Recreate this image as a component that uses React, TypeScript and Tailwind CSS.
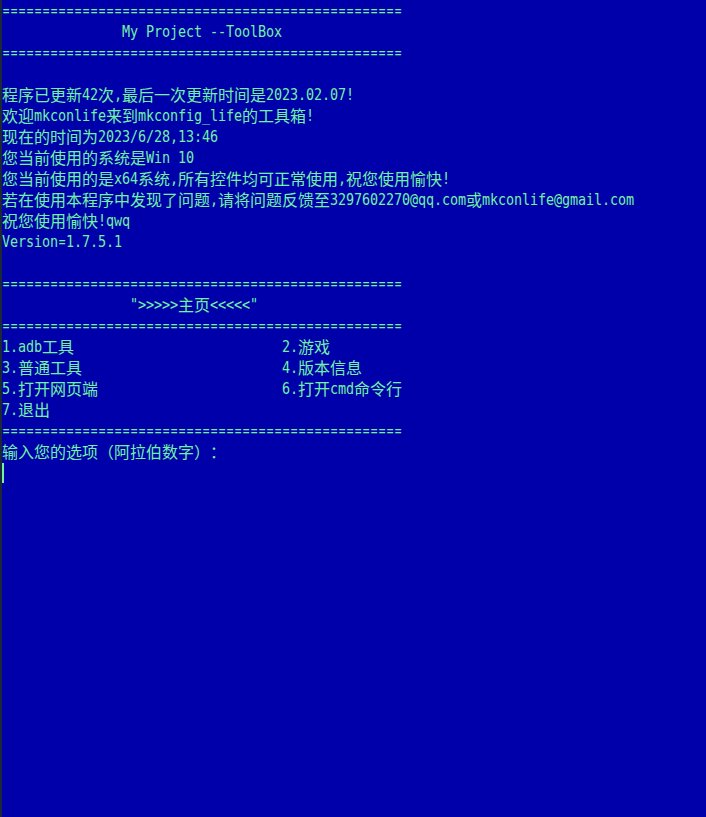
import React from "react";

const SEP = "=".repeat(50);

const lines: string[] = [
  SEP,
  " ".repeat(15) + "My Project --ToolBox",
  SEP,
  "",
  "程序已更新42次,最后一次更新时间是2023.02.07!",
  "欢迎mkconlife来到mkconfig_life的工具箱!",
  "现在的时间为2023/6/28,13:46",
  "您当前使用的系统是Win 10",
  "您当前使用的是x64系统,所有控件均可正常使用,祝您使用愉快!",
  "若在使用本程序中发现了问题,请将问题反馈至3297602270@qq.com或mkconlife@gmail.com",
  "祝您使用愉快!qwq",
  "Version=1.7.5.1",
  "",
  SEP,
  " ".repeat(16) + "\">>>>>主页<<<<<\"",
  SEP,
  "1.adb工具" + " ".repeat(26) + "2.游戏",
  "3.普通工具" + " ".repeat(25) + "4.版本信息",
  "5.打开网页端" + " ".repeat(23) + "6.打开cmd命令行",
  "7.退出",
  SEP,
  "输入您的选项（阿拉伯数字）：",
];

const isWide = (c: string) => (c.codePointAt(0) ?? 0) > 0x2e80;

function Line({ text }: { text: string }) {
  return (
    <div className="h-[21px] flex items-center whitespace-pre">
      {Array.from(text).map((c, i) =>
        isWide(c) ? (
          <span
            key={i}
            className="inline-flex justify-center w-[16px] shrink-0 font-['Noto_Sans_CJK_SC',sans-serif]"
          >
            {c}
          </span>
        ) : c === "=" ? (
          <span
            key={i}
            className="inline-flex justify-center w-[8px] shrink-0 scale-x-[0.7] font-['DejaVu_Sans_Mono',monospace]"
          >
            {c}
          </span>
        ) : (
          <span
            key={i}
            className="inline-flex justify-center w-[8px] shrink-0 scale-x-[0.84] font-['DejaVu_Sans_Mono',monospace]"
          >
            {c}
          </span>
        )
      )}
    </div>
  );
}

export default function App() {
  return (
    <div className="w-[706px] h-[817px] bg-[#0000aa] flex overflow-hidden">
      <div className="w-[2px] h-full bg-[#1c2838] shrink-0" />
      <div className="flex-1 text-[#70f2a6] text-[16px] leading-[21px]">
        {lines.map((l, i) => (
          <Line key={i} text={l} />
        ))}
        <div className="h-[21px] flex items-center">
          <div className="w-[2px] h-[20px] bg-[#70f2a6]" />
        </div>
      </div>
    </div>
  );
}
